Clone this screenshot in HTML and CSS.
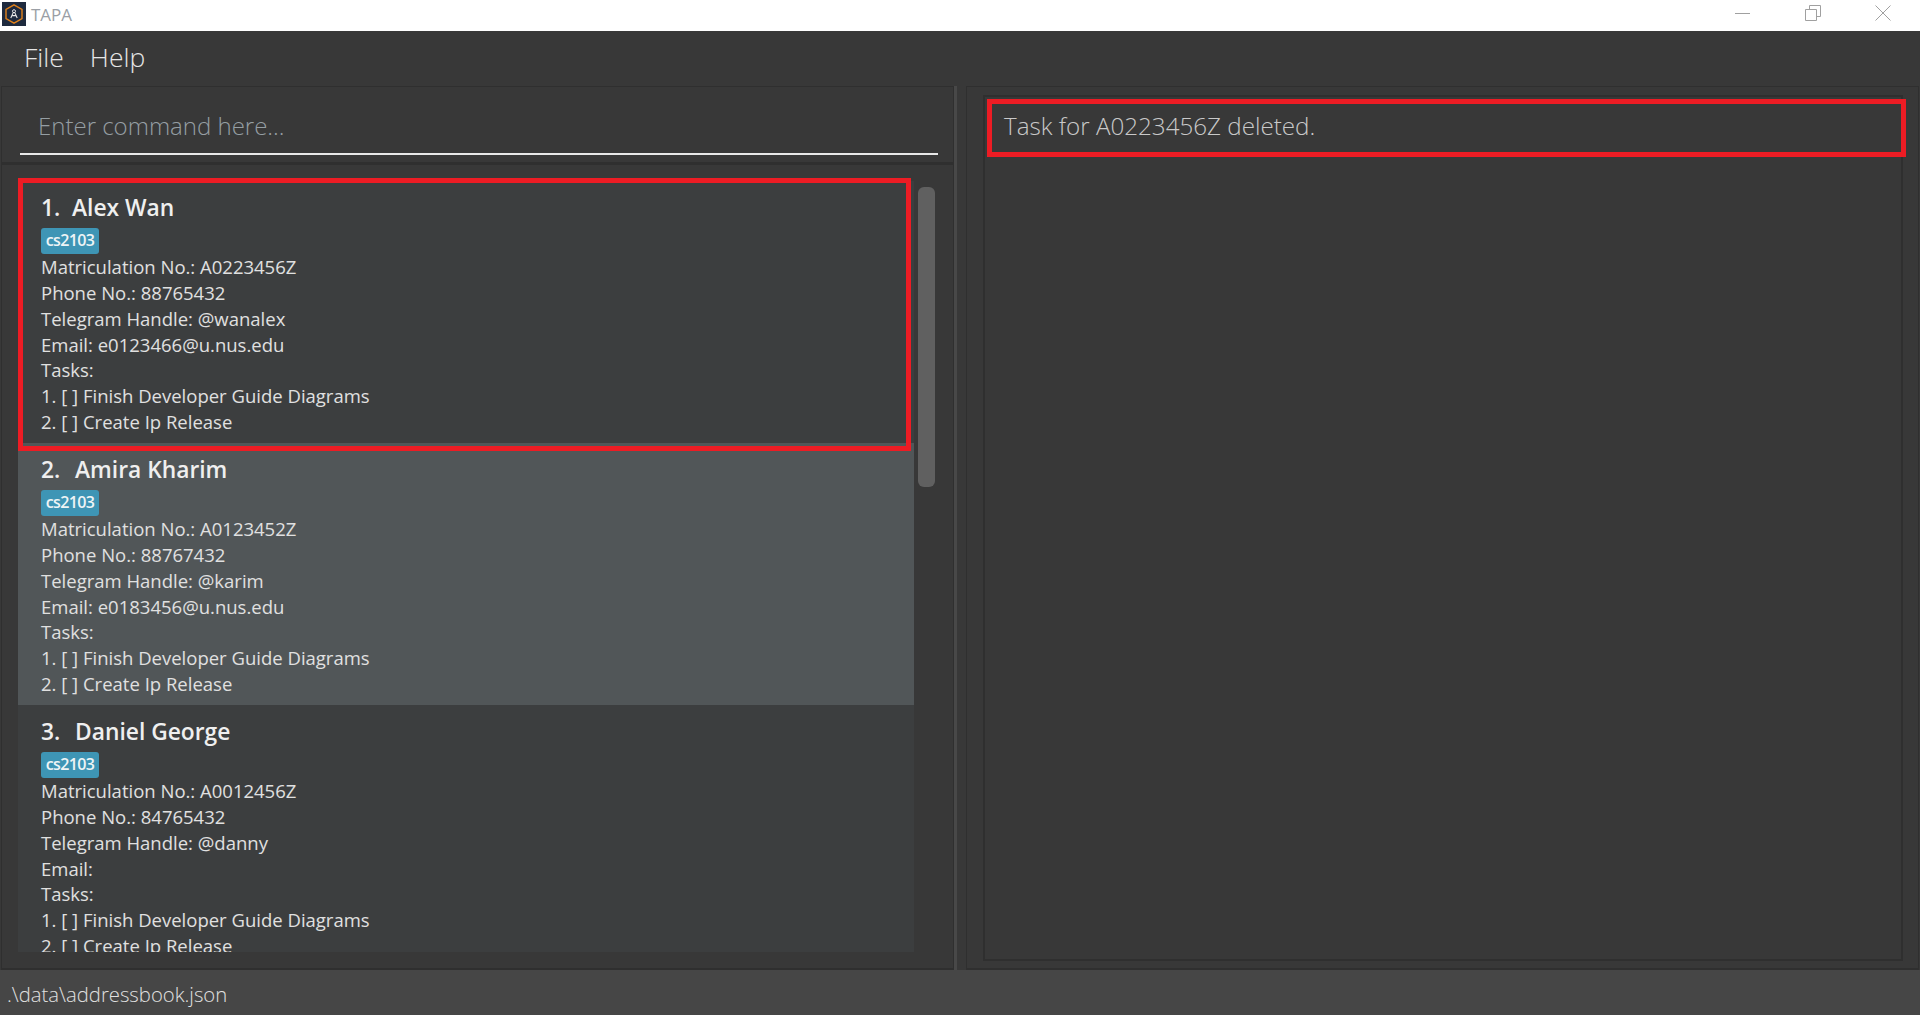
FILE: index.html
```html
<!DOCTYPE html>
<html lang="en">
<head>
    <meta charset="UTF-8">
    <title>TAPA</title>
    <link rel="stylesheet" href="styles.css">
</head>
<body>
    <header class="titlebar">
        <div class="title-left">
            <svg class="logo" viewBox="0 0 24 24" width="24" height="24">
                <rect width="24" height="24" fill="#1e2a3e"/>
                <path d="M12 2.8 20 7.4V16.6L12 21.2 4 16.6V7.4Z" fill="none" stroke="#e0811c" stroke-width="1.4"/>
                <circle cx="12" cy="9.2" r="1.5" fill="none" stroke="#e8e8e8" stroke-width="1"/>
                <path d="M11.2 10.6 8.8 16M12.8 10.6 15.2 16M10 13.6H14" fill="none" stroke="#e8e8e8" stroke-width="1.1"/>
            </svg>
            <span class="app-name">TAPA</span>
        </div>
        <div class="window-btns">
            <svg viewBox="0 0 16 16" width="16" height="16"><path d="M0 8.5H15" stroke="#a0a0a0" stroke-width="1"/></svg>
            <svg viewBox="0 0 16 16" width="16" height="16"><path d="M0.5 4.5H11.5V15.5H0.5ZM4.5 4.5V0.5H15.5V11.5H11.5" fill="none" stroke="#a0a0a0" stroke-width="1"/></svg>
            <svg viewBox="0 0 16 16" width="16" height="16"><path d="M0.5 0.5 15.5 15.5M15.5 0.5 0.5 15.5" stroke="#a0a0a0" stroke-width="1"/></svg>
        </div>
    </header>

    <nav class="menubar">
        <span>File</span>
        <span>Help</span>
    </nav>

    <main class="content">
        <section class="left-pane">
            <div class="command-box">
                <div class="command-input">Enter command here...</div>
            </div>
            <div class="list-area">
                <div class="person-list">
                    <article class="card">
                        <h2 class="card-name"><span class="card-index">1.</span>Alex Wan</h2>
                        <span class="tag">cs2103</span>
                        <p>Matriculation No.: A0223456Z</p>
                        <p>Phone No.: 88765432</p>
                        <p>Telegram Handle: @wanalex</p>
                        <p>Email: e0123466@u.nus.edu</p>
                        <p>Tasks:</p>
                        <p>1. [ ] Finish Developer Guide Diagrams</p>
                        <p>2. [ ] Create Ip Release</p>
                    </article>
                    <article class="card card-even">
                        <h2 class="card-name"><span class="card-index">2.</span>Amira Kharim</h2>
                        <span class="tag">cs2103</span>
                        <p>Matriculation No.: A0123452Z</p>
                        <p>Phone No.: 88767432</p>
                        <p>Telegram Handle: @karim</p>
                        <p>Email: e0183456@u.nus.edu</p>
                        <p>Tasks:</p>
                        <p>1. [ ] Finish Developer Guide Diagrams</p>
                        <p>2. [ ] Create Ip Release</p>
                    </article>
                    <article class="card">
                        <h2 class="card-name"><span class="card-index">3.</span>Daniel George</h2>
                        <span class="tag">cs2103</span>
                        <p>Matriculation No.: A0012456Z</p>
                        <p>Phone No.: 84765432</p>
                        <p>Telegram Handle: @danny</p>
                        <p>Email:</p>
                        <p>Tasks:</p>
                        <p>1. [ ] Finish Developer Guide Diagrams</p>
                        <p>2. [ ] Create Ip Release</p>
                    </article>
                    <div class="highlight highlight-card"></div>
                </div>
                <div class="scroll-track"><div class="scroll-thumb"></div></div>
            </div>
        </section>

        <div class="divider"></div>

        <section class="right-pane">
            <div class="result-box">
                <div class="result-text">Task for A0223456Z deleted.</div>
                <div class="highlight highlight-result"></div>
            </div>
        </section>
    </main>

    <footer class="statusbar">.\data\addressbook.json</footer>
</body>
</html>
```

FILE: styles.css
```css
* {
    box-sizing: border-box;
}

html, body {
    height: 100%;
}

body {
    margin: 0;
    display: flex;
    flex-direction: column;
    overflow: hidden;
    background-color: #383838;
    color: #fff;
    font-family: 'Open Sans', 'Noto Sans', sans-serif;
}

.titlebar {
    height: 31px;
    flex: none;
    display: flex;
    justify-content: space-between;
    align-items: center;
    background-color: #fff;
}

.title-left {
    display: flex;
    align-items: center;
    gap: 5px;
    padding: 0 0 3px 2px;
}

.logo {
    display: block;
}

.app-name {
    font-size: 17px;
    color: #9a9fa5;
}

.window-btns {
    display: flex;
    gap: 54px;
    padding: 0 29px 5px 0;
}

.window-btns svg {
    display: block;
}

.menubar {
    height: 54px;
    flex: none;
    display: flex;
    align-items: center;
    gap: 26px;
    padding: 0 0 2px 24px;
    font-size: 26.5px;
    font-weight: 300;
    color: #e6e6e6;
}

.content {
    flex: 1;
    min-height: 0;
    display: flex;
    padding: 1px 1px 0 1px;
}

.left-pane {
    width: 953px;
    flex: none;
    display: flex;
    flex-direction: column;
    border: 1px solid #2f2f2f;
    border-width: 1px 1px 2px 1px;
}

.command-box {
    height: 78px;
    flex: none;
    padding: 0 15px 0 18px;
    border-bottom: 3px solid #2f2f2f;
}

.command-input {
    height: 68px;
    padding: 22px 0 0 18px;
    border-bottom: 2px solid #e8e8e8;
    font-size: 24px;
    font-weight: 300;
    line-height: 33px;
    color: #959ea3;
}

.list-area {
    flex: 1;
    min-height: 0;
    display: flex;
    padding: 10px 0 16px 16px;
}

.person-list {
    position: relative;
    width: 896px;
    flex: none;
    padding-top: 6px;
    overflow: hidden;
}

.card {
    height: 262px;
    padding: 11px 0 0 23px;
    background-color: #3c3e3f;
    font-size: 18.5px;
    color: #e0e0e0;
}

.card-even {
    background-color: #515658;
}

.card-name {
    margin: 0 0 4px;
    display: flex;
    font-size: 22.8px;
    font-weight: 600;
    line-height: 32px;
    color: #efefef;
}

.card-index {
    width: 34px;
}

.card:first-child .card-index {
    width: 31px;
}

.tag {
    display: block;
    width: 58px;
    height: 26px;
    border-radius: 3px;
    background-color: #3e95b5;
    font-size: 16px;
    font-weight: 600;
    letter-spacing: -0.6px;
    line-height: 25px;
    text-align: center;
    color: #eef4f6;
}

.card p {
    margin: 0;
    height: 25.85px;
    line-height: 25.85px;
    white-space: nowrap;
}

.scroll-track {
    flex: 1;
    padding: 12px 0 0 4px;
}

.scroll-thumb {
    width: 17px;
    height: 300px;
    border-radius: 6px;
    background-color: #606060;
}

.divider {
    width: 3px;
    flex: none;
    background-color: #484848;
}

.right-pane {
    flex: 1;
    margin-left: 9px;
    padding: 8px 15px 7px 16px;
    border: 1px solid #2f2f2f;
    border-width: 1px 1px 2px 1px;
}

.result-box {
    position: relative;
    height: 100%;
    border: 2px solid #2f2f2f;
    padding: 1px 0 0 19px;
}

.result-text {
    font-size: 24.2px;
    line-height: 56px;
    font-weight: 300;
    color: #c9c9c9;
}

/* red annotation boxes drawn over the screenshot */
.highlight {
    position: absolute;
    border: 5px solid #ed1c24;
    pointer-events: none;
}

.highlight-card {
    top: 3px;
    left: 0;
    width: 893px;
    height: 273px;
}

.highlight-result {
    top: 2px;
    left: 2px;
    width: 919px;
    height: 58px;
}

.statusbar {
    height: 45px;
    flex: none;
    padding-left: 7px;
    background-color: #464646;
    font-size: 20.3px;
    font-weight: 300;
    line-height: 48px;
    color: #e0e0e0;
}
```
